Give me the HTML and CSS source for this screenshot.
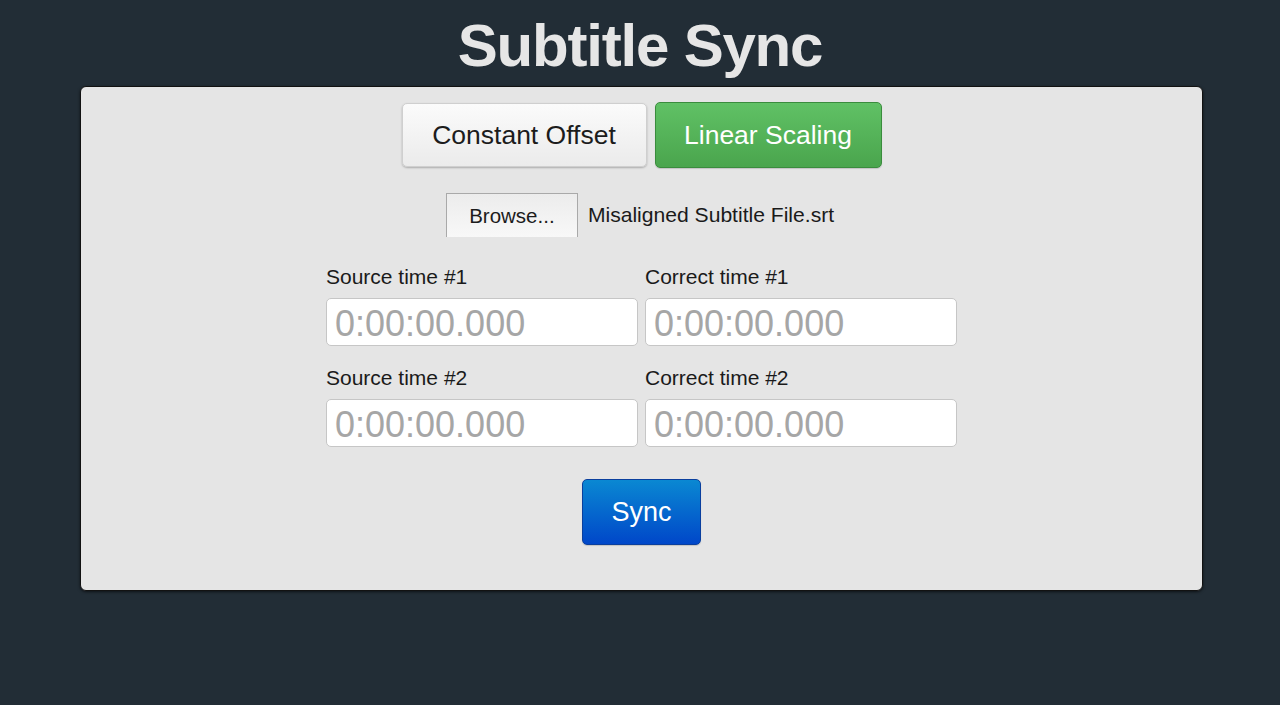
FILE: index.html
```html
<!DOCTYPE html>
<html>
<head>
<meta charset="utf-8">
<title>Subtitle Sync</title>
<link rel="stylesheet" href="styles.css">
</head>
<body>
<h1 class="title">Subtitle Sync</h1>
<main class="panel">
  <div class="modes">
    <button class="mode mode-offset">Constant Offset</button>
    <button class="mode mode-linear">Linear Scaling</button>
  </div>
  <div class="file-row">
    <span class="browse">Browse...</span>
    <span class="file-name">Misaligned Subtitle File.srt</span>
  </div>
  <div class="grid">
    <div class="field">
      <label class="label">Source time #1</label>
      <input class="time" type="text" placeholder="0:00:00.000">
    </div>
    <div class="field">
      <label class="label">Correct time #1</label>
      <input class="time" type="text" placeholder="0:00:00.000">
    </div>
    <div class="field">
      <label class="label">Source time #2</label>
      <input class="time" type="text" placeholder="0:00:00.000">
    </div>
    <div class="field">
      <label class="label">Correct time #2</label>
      <input class="time" type="text" placeholder="0:00:00.000">
    </div>
  </div>
  <div class="actions">
    <button class="sync">Sync</button>
  </div>
</main>
</body>
</html>
```
FILE: styles.css
```css
html, body {
  margin: 0;
  padding: 0;
}
body {
  background: #222d36;
  font-family: "Liberation Sans", Arial, Helvetica, sans-serif;
  color: #1a1a1a;
  height: 705px;
  overflow: hidden;
}
.title {
  margin: 0;
  padding-top: 5px;
  line-height: 81px;
  font-size: 60px;
  font-weight: bold;
  letter-spacing: -1.2px;
  text-align: center;
  color: #e6e6e6;
}
.panel {
  box-sizing: border-box;
  margin-left: 80px;
  width: 1123px;
  height: 505px;
  background: #e5e5e5;
  border: 1px solid #121212;
  border-radius: 6px;
  box-shadow: 0 1px 3px rgba(0,0,0,0.6);
  padding-top: 15px;
  display: flex;
  flex-direction: column;
  align-items: center;
}
.modes {
  display: flex;
  align-items: center;
  gap: 8px;
}
.mode {
  box-sizing: border-box;
  font-family: "Liberation Sans", Arial, Helvetica, sans-serif;
  font-size: 26.5px;
  border-radius: 5px;
  cursor: pointer;
}
.mode-offset {
  width: 245px;
  height: 64px;
  color: #1c1c1c;
  background: linear-gradient(#fbfbfb, #ebebeb);
  border: 1px solid #cfcfcf;
  box-shadow: 0 1px 2px rgba(0,0,0,0.25);
}
.mode-linear {
  width: 227px;
  height: 66px;
  color: #ffffff;
  background: linear-gradient(#60c165, #4aa54d);
  border: 1px solid #3a8c3d;
  box-shadow: 0 1px 1px rgba(0,0,0,0.15);
}
.file-row {
  display: flex;
  align-items: flex-start;
  gap: 10px;
  margin-top: 25px;
  height: 44px;
  margin-right: 3px;
}
.browse {
  box-sizing: border-box;
  width: 132px;
  height: 44px;
  border: 1px solid #a9a9a9;
  border-bottom: none;
  background: linear-gradient(#ececec, #f8f8f8);
  font-size: 20.5px;
  line-height: 44px;
  text-align: center;
  color: #1c1c1c;
}
.file-name {
  font-size: 21.1px;
  line-height: 44px;
  color: #1a1a1a;
}
.grid {
  margin-top: 27px;
  display: grid;
  grid-template-columns: 312px 312px;
  column-gap: 7px;
  row-gap: 19px;
}
.field {
  display: flex;
  flex-direction: column;
}
.label {
  font-size: 21px;
  line-height: 26px;
  margin-bottom: 8px;
  color: #1a1a1a;
}
.time {
  box-sizing: border-box;
  width: 312px;
  height: 48px;
  border: 1px solid #c6c6c6;
  border-radius: 5px;
  background: #ffffff;
  padding: 4px 8px 0;
  font-family: "Liberation Sans", Arial, Helvetica, sans-serif;
  font-size: 36px;
  color: #333;
  outline: none;
}
.time::placeholder {
  color: #a6a6a6;
}
.actions {
  margin-top: 32px;
  display: flex;
  justify-content: center;
}
.sync {
  box-sizing: border-box;
  width: 119px;
  height: 66px;
  font-family: "Liberation Sans", Arial, Helvetica, sans-serif;
  font-size: 27px;
  color: #ffffff;
  background: linear-gradient(#0a88d2, #0047c9);
  border: 1px solid #0a3f9e;
  border-radius: 5px;
  box-shadow: 0 1px 1px rgba(0,0,0,0.15);
  cursor: pointer;
}
```
